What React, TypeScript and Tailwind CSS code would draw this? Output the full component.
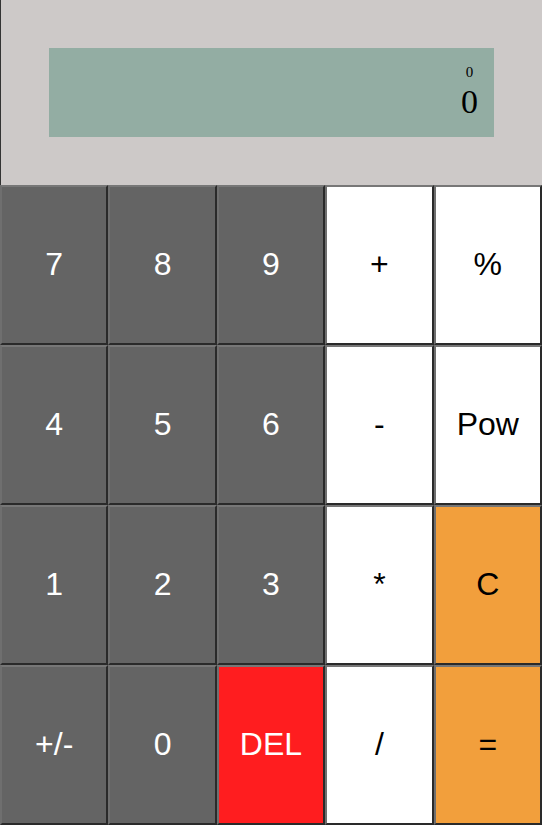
const keys: { label: string; kind: "num" | "op" | "del" | "acc" }[] = [
  { label: "7", kind: "num" },
  { label: "8", kind: "num" },
  { label: "9", kind: "num" },
  { label: "+", kind: "op" },
  { label: "%", kind: "op" },
  { label: "4", kind: "num" },
  { label: "5", kind: "num" },
  { label: "6", kind: "num" },
  { label: "-", kind: "op" },
  { label: "Pow", kind: "op" },
  { label: "1", kind: "num" },
  { label: "2", kind: "num" },
  { label: "3", kind: "num" },
  { label: "*", kind: "op" },
  { label: "C", kind: "acc" },
  { label: "+/-", kind: "num" },
  { label: "0", kind: "num" },
  { label: "DEL", kind: "del" },
  { label: "/", kind: "op" },
  { label: "=", kind: "acc" },
];

const kindClass = {
  num: "bg-[#646464] text-white",
  op: "bg-white text-black",
  del: "bg-[#ff1d1f] text-white",
  acc: "bg-[#f29f3c] text-black",
};

export default function App() {
  return (
    <div className="w-[542px] h-[825px] flex flex-col [font-family:'Liberation_Sans',Arial,sans-serif]">
      <div className="h-[185px] bg-[#cdc9c8] border-l border-[#333] py-[48px] pl-[48px] pr-[48px]">
        <div className="h-[89px] bg-[#93ada3] flex justify-end pr-[16px] pt-[16px] [font-family:'Liberation_Serif',serif] text-black">
          <div className="flex flex-col items-center">
            <div className="text-[15px] leading-[17px]">0</div>
            <div className="text-[34px] leading-[39px] mt-[1px]">0</div>
          </div>
        </div>
      </div>
      <div className="flex-1 grid grid-cols-5 grid-rows-4">
        {keys.map((k) => (
          <button
            key={k.label}
            className={
              "border-2 border-t-[#777] border-l-[#6f6f6f] border-b-[#2a2a2a] border-r-[#2a2a2a] text-[32px] leading-none pb-[3px] flex items-center justify-center " +
              kindClass[k.kind]
            }
          >
            {k.label}
          </button>
        ))}
      </div>
    </div>
  );
}
